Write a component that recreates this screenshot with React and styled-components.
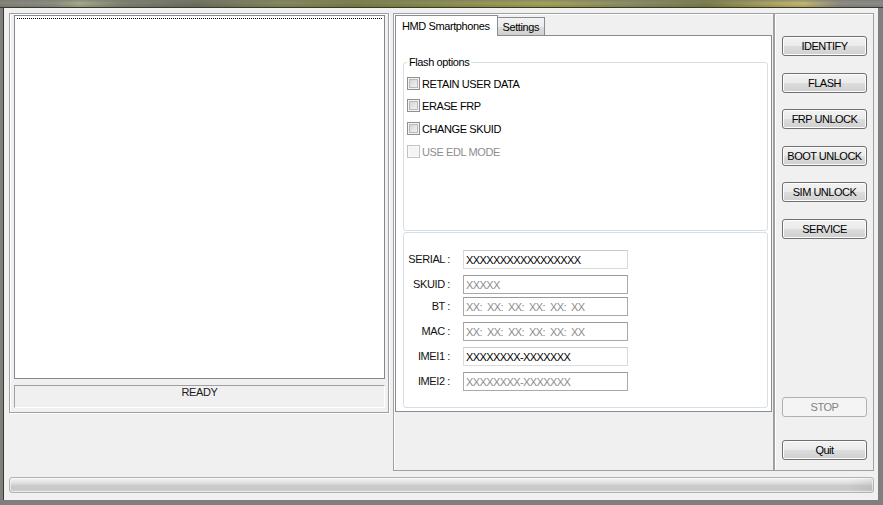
import React from 'react';
import styled, { createGlobalStyle } from 'styled-components';

const GlobalStyle = createGlobalStyle`
  html, body {
    margin: 0;
    padding: 0;
  }
  body {
    background: #7f7f7f;
    font-family: 'Liberation Sans', Arial, sans-serif;
    font-size: 11px;
    letter-spacing: -0.4px;
    color: #000;
  }
  * {
    box-sizing: border-box;
  }
`;

const Screen = styled.div`
  width: 883px;
  height: 505px;
  overflow: hidden;
  background: #7f7f7f;
`;

const Backdrop = styled.div`
  height: 8px;
  border-bottom: 1px solid #3a3a2a;
  background:
    linear-gradient(180deg, rgba(120, 120, 110, 0.6) 0%, rgba(255, 255, 255, 0) 45%, rgba(60, 60, 40, 0.2) 100%),
    linear-gradient(90deg, #85857f 0%, #8c8d83 6%, #a4ab8c 9%, #7f8172 14%, #6e7060 22%, #858a5a 32%,
      #7a7f45 40%, #8d9050 50%, #a4a456 62%, #8a8c62 72%, #7b7d48 80%, #b5aa62 88%, #c4b871 91%,
      #8d8c86 95%, #8a8a8a 100%);
`;

const Window = styled.div`
  margin-left: 3px;
  width: 875px;
  height: 492px;
  border-left: 1px solid #3a3a2a;
  background: #f0f0f0;
  padding: 5px 4px 7px 5px;
  display: flex;
  flex-direction: column;
`;

const TopRow = styled.div`
  display: flex;
  align-items: flex-start;
  height: 458px;
`;

const LogGroup = styled.div`
  width: 380px;
  height: 400px;
  border: 1px solid #a0a0a0;
  box-shadow: inset 1px 1px 0 #fff, 1px 1px 0 #fff;
  padding: 1px 3px 4px 4px;
  display: flex;
  flex-direction: column;
  gap: 6px;
`;

const LogList = styled.div`
  flex: 1;
  background: #fff;
  border: 1px solid #828790;
  padding: 2px;
`;

const FocusLine = styled.div`
  border-top: 1px dotted #000;
`;

const StatusBox = styled.div`
  height: 23px;
  border: 1px solid;
  border-color: #a0a0a0 #fff #fff #a0a0a0;
  padding-top: 0;
  line-height: 13px;
  text-align: center;
  color: #1a1a1a;
`;

const Frame = styled.div`
  width: ${(p) => p.$width}px;
  height: 458px;
  margin-left: ${(p) => p.$gap || 0}px;
  border: 1px solid #a0a0a0;
  box-shadow: inset 1px 1px 0 #fff;
`;

const TabWidget = styled.div`
  width: 377px;
  margin: 1px;
`;

const TabBar = styled.div`
  display: flex;
  align-items: flex-end;
  height: 20px;
`;

const Tab = styled.div`
  position: relative;
  display: flex;
  align-items: center;
  border: 1px solid #898c95;
  border-bottom: none;
  ${(p) =>
    p.$active
      ? `
    z-index: 1;
    height: 21px;
    margin-bottom: -1px;
    padding: 0 7px 1px 6px;
    background: #fff;
  `
      : `
    height: 18px;
    margin-left: -1px;
    padding: 1px 5px 0 5px;
    background: linear-gradient(180deg, #f3f3f3 0%, #ebebeb 50%, #dddddd 52%, #cfcfcf 100%);
  `}
`;

const Pane = styled.div`
  height: 377px;
  border: 1px solid #898c95;
  background: #fff;
  padding: 20px 3px 3px 7px;
  display: flex;
  flex-direction: column;
`;

const OptionGroup = styled.fieldset`
  margin: 0;
  height: 175px;
  min-width: 0;
  padding: 4px 3px 0 3px;
  border: 1px solid #d5dfe5;
  border-radius: 3px;
`;

const Legend = styled.legend`
  padding: 0 2px;
  line-height: 13px;
`;

const CheckRow = styled.label`
  display: flex;
  align-items: center;
  gap: 2px;
  height: ${(p) => p.$height}px;
  color: ${(p) => (p.$disabled ? '#8d8d8d' : '#000')};
`;

const Box = styled.span`
  width: 13px;
  height: 13px;
  border: 1px solid ${(p) => (p.$disabled ? '#c2c2c2' : '#8e8f8f')};
  background: ${(p) =>
    p.$disabled ? '#f4f4f4' : 'linear-gradient(135deg, #cbcbcb 0%, #e4e4e4 50%, #f7f7f7 100%)'};
  box-shadow: ${(p) =>
    p.$disabled ? 'inset 0 0 0 1px #fafafa' : 'inset 0 0 0 1px #f4f4f4, inset 0 0 0 2px #b9b9b9'};
`;

const InfoGroup = styled.div`
  flex: 1;
  margin-top: 1px;
  border: 1px solid #d5dfe5;
  border-radius: 3px;
  padding-top: 17px;
`;

const FieldRow = styled.div`
  display: flex;
  align-items: center;
  gap: 13px;
  height: 19px;
  margin-top: ${(p) => p.$top}px;
`;

const FieldLabel = styled.span`
  width: 46px;
  padding-bottom: 1px;
  text-align: right;
  color: #111;
`;

const Field = styled.input`
  width: 165px;
  height: 19px;
  margin: 0;
  padding: 0 2px;
  font-family: 'Liberation Sans', Arial, sans-serif;
  font-size: 11px;
  letter-spacing: -0.6px;
  word-spacing: 2.6px;
  background: #fff;
  outline: none;
  color: ${(p) => (p.$filled ? '#000' : '#8c8c8c')};
  border: 1px solid ${(p) => (p.$filled ? '#dadada' : '#a9a9a9')};
  border-top-color: ${(p) => (p.$filled ? '#c9c9c9' : '#9a9a9a')};
`;

const ActionFrame = styled(Frame)`
  display: flex;
  flex-direction: column;
  align-items: flex-start;
  padding: 22px 0 10px 7px;
`;

const ButtonStack = styled.div`
  display: flex;
  flex-direction: column;
  gap: 16.5px;
`;

const Button = styled.button`
  width: 85px;
  height: 20px;
  margin: 0;
  margin-top: ${(p) => p.$top || 0};
  padding: 0;
  font-family: 'Liberation Sans', Arial, sans-serif;
  font-size: 11px;
  letter-spacing: -0.5px;
  border-radius: 3px;
  border: 1px solid ${(p) => (p.disabled ? '#adb2b5' : '#707070')};
  color: ${(p) => (p.disabled ? '#838383' : '#000')};
  background: ${(p) =>
    p.disabled
      ? '#f4f4f4'
      : 'linear-gradient(180deg, #f2f2f2 0%, #ebebeb 48%, #dddddd 52%, #cfcfcf 100%)'};
  box-shadow: inset 0 0 0 1px ${(p) => (p.disabled ? '#f4f4f4' : '#fcfcfc')};
`;

const Progress = styled.div`
  margin-top: 6px;
  height: 16px;
  border: 1px solid #b2b2b2;
  border-radius: 3px;
  background:
    linear-gradient(90deg, rgba(0, 0, 0, 0) 97%, rgba(0, 0, 0, 0.06) 100%),
    linear-gradient(180deg, #f4f4f4 0%, #e6e6e6 25%, #dcdcdc 40%, #cbcbcb 55%, #c8c8c8 80%, #d6d6d6 100%);
  box-shadow: inset 0 0 0 1px rgba(255, 255, 255, 0.5);
`;

const options = [
  { label: 'RETAIN USER DATA', height: 21 },
  { label: 'ERASE FRP', height: 23 },
  { label: 'CHANGE SKUID', height: 23 },
  { label: 'USE EDL MODE', height: 23, disabled: true },
];

const fields = [
  { label: 'SERIAL :', value: 'XXXXXXXXXXXXXXXXX', filled: true, top: 0 },
  { label: 'SKUID :', value: 'XXXXX', top: 6 },
  { label: 'BT :', value: 'XX: XX: XX: XX: XX: XX', top: 3 },
  { label: 'MAC :', value: 'XX: XX: XX: XX: XX: XX', top: 6 },
  { label: 'IMEI1 :', value: 'XXXXXXXX-XXXXXXX', filled: true, top: 6 },
  { label: 'IMEI2 :', value: 'XXXXXXXX-XXXXXXX', top: 6 },
];

const actions = ['IDENTIFY', 'FLASH', 'FRP UNLOCK', 'BOOT UNLOCK', 'SIM UNLOCK', 'SERVICE'];

const App = () => {
  return (
    <Screen>
      <GlobalStyle />
      <Backdrop />
      <Window>
        <TopRow>
          <LogGroup>
            <LogList>
              <FocusLine />
            </LogList>
            <StatusBox>READY</StatusBox>
          </LogGroup>

          <Frame $width={381} $gap={4}>
            <TabWidget>
              <TabBar>
                <Tab $active>HMD Smartphones</Tab>
                <Tab>Settings</Tab>
              </TabBar>
              <Pane>
                <OptionGroup>
                  <Legend>Flash options</Legend>
                  {options.map((o) => (
                    <CheckRow key={o.label} $height={o.height} $disabled={o.disabled}>
                      <Box $disabled={o.disabled} />
                      {o.label}
                    </CheckRow>
                  ))}
                </OptionGroup>
                <InfoGroup>
                  {fields.map((f) => (
                    <FieldRow key={f.label} $top={f.top}>
                      <FieldLabel>{f.label}</FieldLabel>
                      <Field readOnly value={f.value} $filled={f.filled} />
                    </FieldRow>
                  ))}
                </InfoGroup>
              </Pane>
            </TabWidget>
          </Frame>

          <ActionFrame $width={100}>
            <ButtonStack>
              {actions.map((a) => (
                <Button key={a}>{a}</Button>
              ))}
            </ButtonStack>
            <Button disabled $top="auto">
              STOP
            </Button>
            <Button $top="23px">Quit</Button>
          </ActionFrame>
        </TopRow>
        <Progress />
      </Window>
    </Screen>
  );
};

export default App;
